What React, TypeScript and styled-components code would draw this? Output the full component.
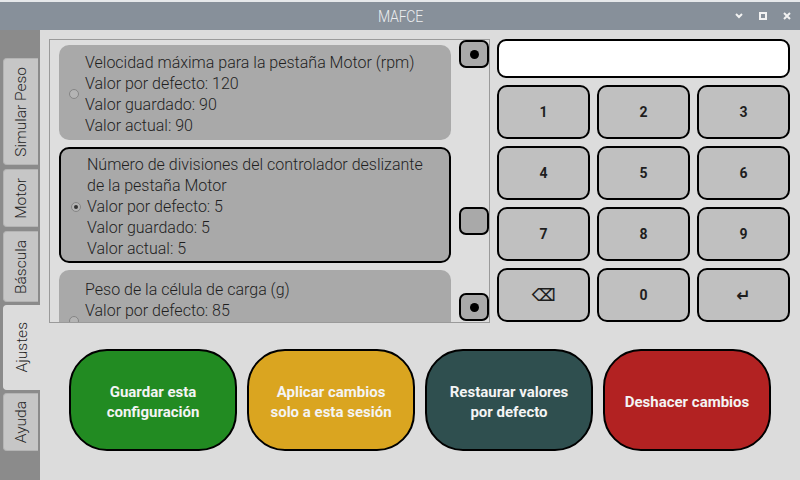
import React from "react";
import styled, { createGlobalStyle } from "styled-components";

const Global = createGlobalStyle`
  html, body { margin: 0; padding: 0; background: #dcdcdc; }
  body { font-family: Roboto, "Noto Sans", sans-serif; }
  * { box-sizing: border-box; }
`;

const Window = styled.div`
  width: 800px;
  height: 480px;
  display: flex;
  flex-direction: column;
  overflow: hidden;
`;

const TitleBar = styled.div`
  height: 30px;
  background: #87909a;
  border-top: 2px solid #e6e8ea;
  display: grid;
  grid-template-columns: 1fr auto 1fr;
  align-items: center;
`;

const Title = styled.div`
  grid-column: 2;
  color: #eceef0;
  font-family: Roboto, sans-serif;
  font-weight: 300;
  font-size: 16px;
  letter-spacing: -0.3px;
  transform: scaleX(0.88);
`;

const WinControls = styled.div`
  grid-column: 3;
  justify-self: end;
  display: flex;
  align-items: center;
  gap: 16px;
  padding-right: 9px;
  svg { display: block; }
`;

const Body = styled.div`
  flex: 1;
  display: flex;
`;

const Sidebar = styled.div`
  width: 40px;
  background: #8b8b8b;
  display: flex;
  flex-direction: column;
  padding-top: 28px;
`;

const Tab = styled.div<{ $h: number; $gap: number; $active?: boolean }>`
  height: ${(p) => p.$h}px;
  margin-top: ${(p) => p.$gap}px;
  margin-left: 3px;
  width: ${(p) => (p.$active ? 37 : 35)}px;
  background: ${(p) => (p.$active ? "#dcdcdc" : "#c6c6c6")};
  border: 1px solid ${(p) => (p.$active ? "#dcdcdc" : "#b4b4b4")};
  border-right: none;
  border-radius: 4px 0 0 4px;
  display: flex;
  align-items: center;
  justify-content: center;
  span {
    writing-mode: vertical-rl;
    transform: rotate(180deg);
    font-size: 15.5px;
    font-weight: 300;
    color: #222;
    white-space: nowrap;
  }
`;

const Main = styled.div`
  flex: 1;
  display: flex;
  flex-direction: column;
  padding: 9px 0 0 9px;
  background: #dcdcdc;
`;

const TopRow = styled.div`
  display: flex;
  align-items: flex-start;
  gap: 7px;
`;

const ScrollFrame = styled.div`
  width: 441px;
  height: 284px;
  border: 1px solid #9a9a9a;
  display: flex;
  justify-content: space-between;
  background: #dedede;
`;

const CardList = styled.div`
  width: 401px;
  padding: 5px 0 0 9px;
  display: flex;
  flex-direction: column;
  gap: 7px;
  overflow: hidden;
`;

const Card = styled.div<{ $b: number; $pt: number; $pb: number }>`
  flex-shrink: 0;
  background: #a9a9a9;
  border: ${(p) => p.$b}px solid #000;
  border-radius: 10px;
  padding: ${(p) => p.$pt}px 0 ${(p) => p.$pb}px 10px;
  display: flex;
  align-items: center;
  gap: 6px;
`;

const Radio = styled.div<{ $on?: boolean }>`
  width: 10px;
  height: 10px;
  border-radius: 50%;
  border: 1px solid #858585;
  background: #b4b4b4;
  flex-shrink: 0;
  display: flex;
  align-items: center;
  justify-content: center;
  &::after {
    content: "";
    width: 4px;
    height: 4px;
    border-radius: 50%;
    background: ${(p) => (p.$on ? "#333" : "transparent")};
  }
`;

const CardText = styled.div`
  font-size: 16px;
  font-weight: 300;
  line-height: 21px;
  color: #1f1f1f;
`;

const ScrollBar = styled.div`
  width: 30px;
  padding: 0 0 1px 0;
  display: flex;
  flex-direction: column;
  justify-content: space-between;
  position: relative;
`;

const SBButton = styled.div<{ $dot?: boolean }>`
  width: 30px;
  height: 28px;
  border: 2px solid #000;
  border-radius: 7px;
  background: #a9a9a9;
  display: flex;
  align-items: center;
  justify-content: center;
  &::after {
    content: "";
    width: 9px;
    height: 9px;
    border-radius: 50%;
    background: ${(p) => (p.$dot ? "#000" : "transparent")};
  }
`;

const Handle = styled(SBButton)`
  position: absolute;
  top: 167px;
  left: 0;
`;

const Keypad = styled.div`
  display: grid;
  grid-template-columns: repeat(3, 93px);
  grid-template-rows: 39px repeat(4, 54px);
  column-gap: 7px;
  row-gap: 7px;
`;

const Display = styled.div`
  grid-column: 1 / span 3;
  background: #fff;
  border: 2px solid #000;
  border-radius: 9px;
`;

const Key = styled.div<{ $sym?: boolean }>`
  background: #c0c0c0;
  border: 2px solid #000;
  border-radius: 10px;
  display: flex;
  align-items: center;
  justify-content: center;
  font-weight: 700;
  font-size: ${(p) => (p.$sym ? "17px" : "14px")};
  font-family: ${(p) => (p.$sym ? '"DejaVu Sans", sans-serif' : "Roboto, sans-serif")};
  color: #1e1e1e;
`;

const ButtonRow = styled.div`
  display: flex;
  gap: 10px;
  margin-top: 26px;
  padding-left: 20px;
`;

const ActionButton = styled.div<{ $bg: string }>`
  width: 168px;
  height: 102px;
  background: ${(p) => p.$bg};
  border: 2px solid #000;
  border-radius: 38px;
  display: flex;
  align-items: center;
  justify-content: center;
  text-align: center;
  color: #f4f4f4;
  font-weight: 700;
  font-size: 15px;
  line-height: 20px;
  padding-top: 3px;
`;

const tabs = [
  { label: "Simular Peso", h: 107, gap: 0 },
  { label: "Motor", h: 58, gap: 4 },
  { label: "Báscula", h: 71, gap: 4 },
  { label: "Ajustes", h: 85, gap: 3, active: true },
  { label: "Ayuda", h: 58, gap: 3 },
];

const cards = [
  {
    b: 0,
    pt: 7,
    pb: 4,
    on: false,
    lines: [
      "Velocidad máxima para la pestaña Motor (rpm)",
      "Valor por defecto: 120",
      "Valor guardado: 90",
      "Valor actual: 90",
    ],
  },
  {
    b: 2,
    pt: 5,
    pb: 2,
    on: true,
    lines: [
      "Número de divisiones del controlador deslizante",
      "de la pestaña Motor",
      "Valor por defecto: 5",
      "Valor guardado: 5",
      "Valor actual: 5",
    ],
  },
  {
    b: 0,
    pt: 9,
    pb: 10,
    on: false,
    lines: [
      "Peso de la célula de carga (g)",
      "Valor por defecto: 85",
      "Valor guardado: 85",
      "Valor actual: 85",
    ],
  },
];

const keys = ["1", "2", "3", "4", "5", "6", "7", "8", "9", "⌫", "0", "↵"];

const actions = [
  { bg: "#228b22", text: ["Guardar esta", "configuración"] },
  { bg: "#daa520", text: ["Aplicar cambios", "solo a esta sesión"] },
  { bg: "#2f4f4f", text: ["Restaurar valores", "por defecto"] },
  { bg: "#b22222", text: ["Deshacer cambios"] },
];

export default function App() {
  return (
    <Window>
      <Global />
      <TitleBar>
        <Title>MAFCE</Title>
        <WinControls>
          <svg width="8" height="6" viewBox="0 0 8 6">
            <path d="M1 1 L4 4 L7 1" stroke="#f2f2f2" strokeWidth="2" fill="none" />
          </svg>
          <svg width="8" height="8" viewBox="0 0 8 8">
            <rect x="1" y="1" width="6" height="6" stroke="#f2f2f2" strokeWidth="2" fill="none" />
          </svg>
          <svg width="8" height="8" viewBox="0 0 8 8">
            <path d="M1 1 L7 7 M7 1 L1 7" stroke="#f2f2f2" strokeWidth="2" fill="none" />
          </svg>
        </WinControls>
      </TitleBar>
      <Body>
        <Sidebar>
          {tabs.map((t) => (
            <Tab key={t.label} $h={t.h} $gap={t.gap} $active={t.active}>
              <span>{t.label}</span>
            </Tab>
          ))}
        </Sidebar>
        <Main>
          <TopRow>
            <ScrollFrame>
              <CardList>
                {cards.map((c, i) => (
                  <Card key={i} $b={c.b} $pt={c.pt} $pb={c.pb}>
                    <Radio $on={c.on} />
                    <CardText>
                      {c.lines.map((l) => (
                        <div key={l}>{l}</div>
                      ))}
                    </CardText>
                  </Card>
                ))}
              </CardList>
              <ScrollBar>
                <SBButton $dot />
                <Handle />
                <SBButton $dot />
              </ScrollBar>
            </ScrollFrame>
            <Keypad>
              <Display />
              {keys.map((k) => (
                <Key key={k} $sym={k === "⌫" || k === "↵"}>
                  {k}
                </Key>
              ))}
            </Keypad>
          </TopRow>
          <ButtonRow>
            {actions.map((a) => (
              <ActionButton key={a.bg} $bg={a.bg}>
                <div>
                  {a.text.map((t) => (
                    <div key={t}>{t}</div>
                  ))}
                </div>
              </ActionButton>
            ))}
          </ButtonRow>
        </Main>
      </Body>
    </Window>
  );
}
